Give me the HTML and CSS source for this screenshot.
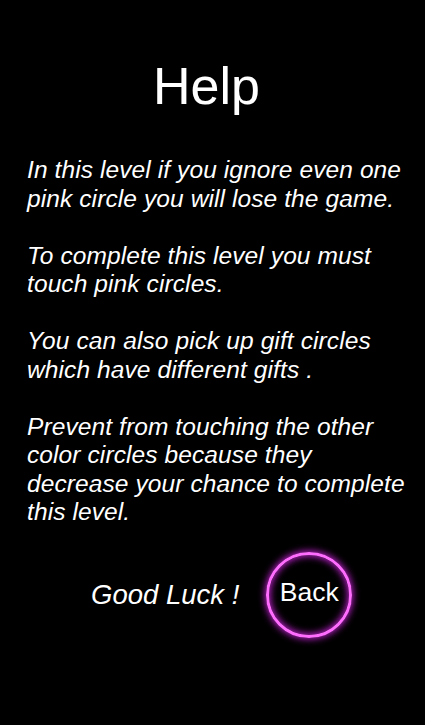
FILE: index.html
```html
<!DOCTYPE html>
<html>
<head>
<meta charset="utf-8">
<link rel="stylesheet" href="styles.css">
</head>
<body>
<div class="screen">
  <h1 class="title">Help</h1>
  <div class="text">
    <p>In this level if you ignore even one<br>pink circle you will lose the game.</p>
    <p>To complete this level you must<br>touch pink circles.</p>
    <p>You can also pick up gift circles<br>which have different gifts .</p>
    <p>Prevent from touching the other<br>color circles because they<br>decrease your chance to complete<br>this level.</p>
  </div>
  <div class="footer">
    <span class="luck">Good Luck !</span>
    <button class="back">Back</button>
  </div>
</div>
</body>
</html>
```
FILE: styles.css
```css
html, body {
  margin: 0;
  padding: 0;
  background: #000;
}
.screen {
  width: 425px;
  height: 725px;
  background: #000;
  color: #fff;
  font-family: "Liberation Sans", Arial, sans-serif;
  display: flex;
  flex-direction: column;
  box-sizing: border-box;
  padding: 57px 0 0 27px;
}
.title {
  margin: 0;
  font-weight: normal;
  font-size: 52px;
  line-height: 58px;
  text-align: center;
  padding-right: 39px;
}
.text {
  margin-top: 41px;
  font-style: italic;
  font-size: 24.5px;
  line-height: 28.5px;
  letter-spacing: 0.1px;
  white-space: nowrap;
}
.text p {
  margin: 0 0 28.5px 0;
}
.footer {
  display: flex;
  align-items: center;
  gap: 27px;
  margin-top: -3px;
  padding-left: 64px;
}
.luck {
  font-style: italic;
  font-size: 27.5px;
}
.back {
  width: 86px;
  height: 86px;
  border-radius: 50%;
  border: 3px solid #ff6cff;
  background: transparent;
  color: #fff;
  font-family: "Liberation Sans", Arial, sans-serif;
  font-size: 26.5px;
  padding: 0 0 6px 0;
  box-shadow: 0 0 7px 1px #c020d0, inset 0 0 7px 1px #c020d0;
  box-sizing: border-box;
}
```
